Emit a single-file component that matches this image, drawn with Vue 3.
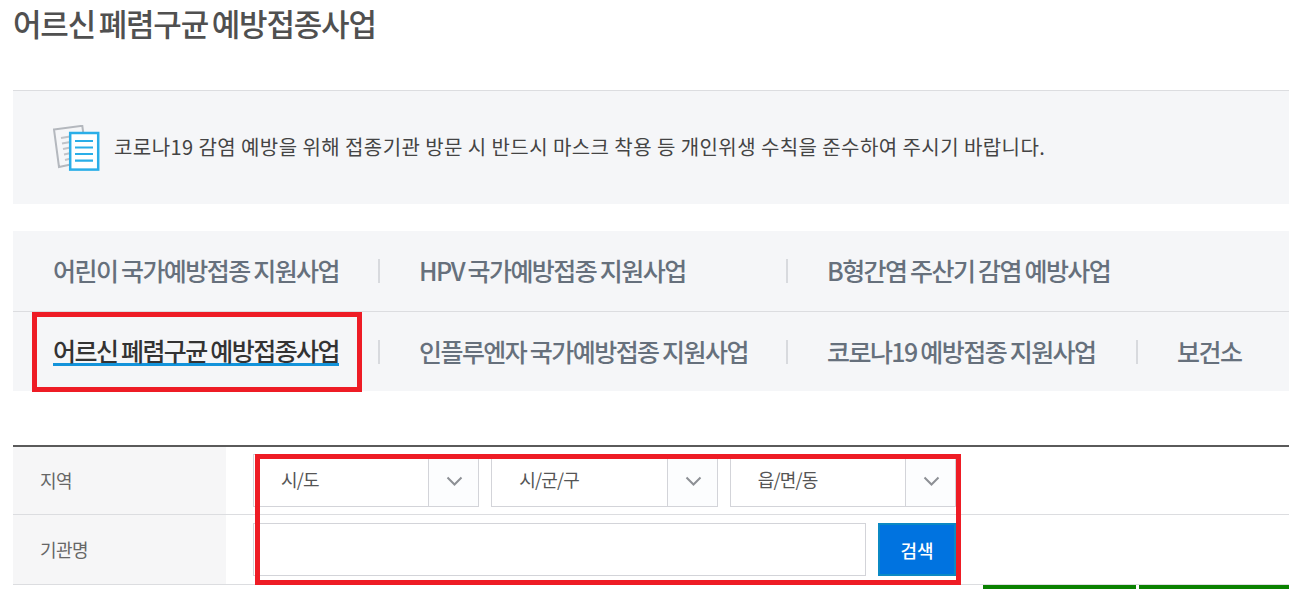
<script setup>
const row1 = ['어린이 국가예방접종 지원사업', 'HPV 국가예방접종 지원사업', 'B형간염 주산기 감염 예방사업']
const row2 = ['어르신 폐렴구균 예방접종사업', '인플루엔자 국가예방접종 지원사업', '코로나19 예방접종 지원사업', '보건소']
const selects = ['시/도', '시/군/구', '읍/면/동']
</script>

<template>
  <div class="page">
    <h1 class="title">어르신 폐렴구균 예방접종사업</h1>

    <div class="notice">
      <svg class="notice-icon" width="47" height="46" viewBox="0 0 47 46">
        <path d="M1 4.5 L29.3 0.8 L34 36 L6 42 Z" fill="#f5f6f8" stroke="#b4b8be" stroke-width="2" />
        <path d="M8 13 L20 11 M9 18.5 L20 16.5 M10 24 L20 22 M11 29.5 L20 27.5 M12 35 L20 33" stroke="#c0c3c8" stroke-width="2" fill="none" />
        <rect x="17.2" y="8" width="28" height="36.6" fill="#fff" stroke="#2aaee8" stroke-width="2.5" />
        <path d="M22 16 H40 M22 22.5 H40 M22 29 H40 M22 35.7 H40" stroke="#2aaee8" stroke-width="2.2" fill="none" />
      </svg>
      <p class="notice-text">코로나19 감염 예방을 위해 접종기관 방문 시 반드시 마스크 착용 등 개인위생 수칙을 준수하여 주시기 바랍니다.</p>
    </div>

    <nav class="tabs">
      <div class="tab-row">
        <div v-for="(t, i) in row1" :key="t" class="tab" :class="{ sep: i > 0 }"><span>{{ t }}</span></div>
      </div>
      <div class="tab-row second">
        <div v-for="(t, i) in row2" :key="t" class="tab" :class="{ sep: i > 0 }">
          <span :class="{ active: i === 0 }">{{ t }}</span>
        </div>
      </div>
      <div class="mark mark-tab"></div>
    </nav>

    <div class="search">
      <div class="s-row first">
        <div class="s-th">지역</div>
        <div class="s-td selects">
          <div v-for="s in selects" :key="s" class="select">
            <span class="select-label">{{ s }}</span>
            <span class="select-btn">
              <svg width="17" height="11" viewBox="0 0 17 11"><path d="M1.5 1.5 L8.5 8.5 L15.5 1.5" fill="none" stroke="#8d9095" stroke-width="2" /></svg>
            </span>
          </div>
        </div>
      </div>
      <div class="s-row second-row">
        <div class="s-th">기관명</div>
        <div class="s-td name">
          <div class="name-input"></div>
          <button class="btn" type="button">검색</button>
        </div>
      </div>
      <div class="mark mark-form"></div>
    </div>

    <div class="greens"><i></i><i></i></div>
  </div>
</template>

<style scoped>
.page {
  width: 1297px;
  height: 589px;
  overflow: hidden;
  box-sizing: border-box;
  padding: 0 8px 0 13px;
  background: #fff;
  font-family: "Noto Sans CJK KR", "Noto Sans", sans-serif;
}
.title {
  margin: 0;
  height: 90px;
  padding-top: 3px;
  box-sizing: border-box;
  font-size: 31px;
  line-height: 40px;
  font-weight: 500;
  letter-spacing: -1.2px;
  word-spacing: -2px;
  color: #505050;
}
.notice {
  height: 114px;
  box-sizing: border-box;
  border-top: 1px solid #dcdde0;
  background: #f5f6f8;
  display: flex;
  align-items: center;
  padding: 0 0 0 40px;
}
.notice-icon { margin-right: 14px; flex: none; }
.notice-text {
  margin: -2px 0 0;
  font-size: 20px;
  letter-spacing: 0.43px;
  color: #444;
  line-height: 26px;
}
.tabs {
  position: relative;
  margin-top: 27px;
  background: #f5f6f8;
  height: 160px;
}
.tab-row {
  display: grid;
  grid-template-columns: 366px 408px 350px 1fr;
  height: 80px;
  box-sizing: border-box;
  align-items: center;
}
.tab-row.second { border-top: 1px solid #dcdde0; }
.tab {
  position: relative;
  padding: 0 0 2px 40px;
  font-size: 25px;
  font-weight: 500;
  letter-spacing: -1.55px;
  word-spacing: -0.5px;
  color: #66707c;
  line-height: 30px;
  white-space: nowrap;
}
.tab.sep::before {
  content: "";
  position: absolute;
  left: -1px;
  top: 4px;
  width: 2px;
  height: 24px;
  background: #d8dade;
}
.tab .active {
  display: inline-block;
  color: #333;
  line-height: 28px;
  border-bottom: 3px solid #1393da;
  height: 27px;
}
.mark {
  position: absolute;
  border: 5px solid #ee1c25;
  box-sizing: border-box;
  pointer-events: none;
}
.mark-tab { left: 19px; top: 81px; width: 330px; height: 80px; }
.search {
  position: relative;
  margin-top: 54px;
  border-top: 2px solid #5a5a5a;
}
.s-row { display: flex; border-bottom: 1px solid #dcdde0; }
.first { height: 67px; }
.second-row { height: 69px; }
.s-th {
  width: 213px;
  flex: none;
  box-sizing: border-box;
  padding: 0 0 2px 27px;
  background: #f6f6f7;
  display: flex;
  align-items: center;
  font-size: 18px;
  color: #666;
  letter-spacing: -0.5px;
}
.s-td { flex: 1; padding-left: 27px; display: flex; align-items: flex-start; }
.selects { gap: 12px; padding-top: 7px; }
.select {
  width: 226.33px;
  height: 53px;
  box-sizing: border-box;
  border: 1px solid #d3d4d9;
  display: flex;
  background: #fff;
}
.select-label {
  flex: 1;
  padding-left: 27px;
  font-size: 18px;
  line-height: 49px;
  color: #555;
  letter-spacing: -0.8px;
}
.select-btn {
  width: 50px;
  flex: none;
  border-left: 1px solid #d3d4d9;
  background: #fcfdfe;
  display: flex;
  align-items: center;
  justify-content: center;
  padding: 2px 0 0 2px;
  box-sizing: border-box;
}
.name { padding-top: 8px; gap: 12px; }
.name-input {
  width: 613px;
  height: 53px;
  box-sizing: border-box;
  border: 1px solid #d3d4d9;
  background: #fff;
}
.btn {
  width: 78px;
  height: 53px;
  box-sizing: border-box;
  border: 2px solid #0b89c4;
  padding: 0;
  background: #0073e0;
  color: #fff;
  font: inherit;
  font-size: 18px;
  font-weight: 500;
}
.mark-form { left: 242px; top: 7px; width: 706px; height: 131px; }
.greens { display: flex; gap: 3px; margin-left: 970px; }
.greens i { display: block; width: 153px; height: 5px; background: #0a8100; }
.greens i + i { width: 150px; }
</style>
